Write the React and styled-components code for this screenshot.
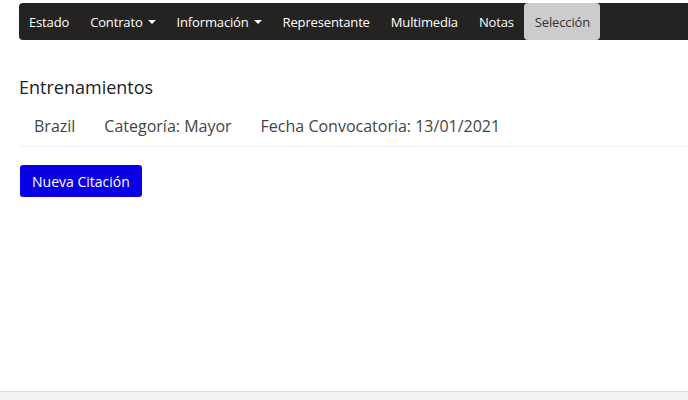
import styled, { createGlobalStyle } from "styled-components";

const Global = createGlobalStyle`
  html, body {
    margin: 0;
    padding: 0;
    background: #fff;
    overflow: hidden;
  }
  body {
    font-family: "Open Sans", "Noto Sans", sans-serif;
    color: #333;
  }
`;

const Page = styled.div`
  height: 100vh;
  display: flex;
  flex-direction: column;
`;

const Main = styled.div`
  flex: 1;
  padding: 3px 0 0 19px;
`;

const Nav = styled.ul`
  list-style: none;
  margin: 0 -40px 0 0;
  padding: 0;
  height: 37px;
  background: #252322;
  border-radius: 4px;
  display: flex;
  align-items: stretch;
`;

const NavItem = styled.li`
  display: flex;
  align-items: center;
  gap: 5px;
  padding: 0 10px 0 ${(p) => (p.first ? "10px" : "11px")};
  font-size: 13px;
  color: ${(p) => (p.active ? "#333" : "#fff")};
  background: ${(p) => (p.active ? "#cccccc" : "transparent")};
  border-radius: ${(p) => (p.active ? "4px" : "0")};
  letter-spacing: -0.15px;
`;

const Caret = styled.span`
  width: 0;
  height: 0;
  border-left: 4px solid transparent;
  border-right: 4px solid transparent;
  border-top: 4px solid #fff;
  margin-top: 1px;
`;

const Title = styled.h4`
  margin: 35px 0 0;
  font-size: 18px;
  font-weight: 400;
  color: #222;
  line-height: 24px;
`;

const InfoRow = styled.div`
  display: flex;
  gap: 29px;
  padding: 15px 15px 8px;
  border-bottom: 1px solid #f0f0f0;
  font-size: 16px;
  color: #444;
  line-height: 24px;
`;

const Button = styled.button`
  margin: 18px 0 0 1px;
  height: 32px;
  padding: 0 12px;
  border: none;
  border-radius: 3px;
  background: #0a00e6;
  color: #fff;
  font-family: inherit;
  font-size: 14px;
  cursor: pointer;
`;

const Footer = styled.div`
  flex: 0 0 8px;
  background: #f2f2f2;
  border-top: 1px solid #dedede;
`;

const items = [
  { label: "Estado" },
  { label: "Contrato", caret: true },
  { label: "Información", caret: true },
  { label: "Representante" },
  { label: "Multimedia" },
  { label: "Notas" },
  { label: "Selección", active: true },
];

export default function App() {
  return (
    <>
      <Global />
      <Page>
        <Main>
          <Nav>
            {items.map((it, i) => (
              <NavItem key={it.label} first={i === 0} active={it.active}>
                {it.label}
                {it.caret && <Caret />}
              </NavItem>
            ))}
          </Nav>
          <Title>Entrenamientos</Title>
          <InfoRow>
            <span>Brazil</span>
            <span>Categoría: Mayor</span>
            <span>Fecha Convocatoria: 13/01/2021</span>
          </InfoRow>
          <Button>Nueva Citación</Button>
        </Main>
        <Footer />
      </Page>
    </>
  );
}
